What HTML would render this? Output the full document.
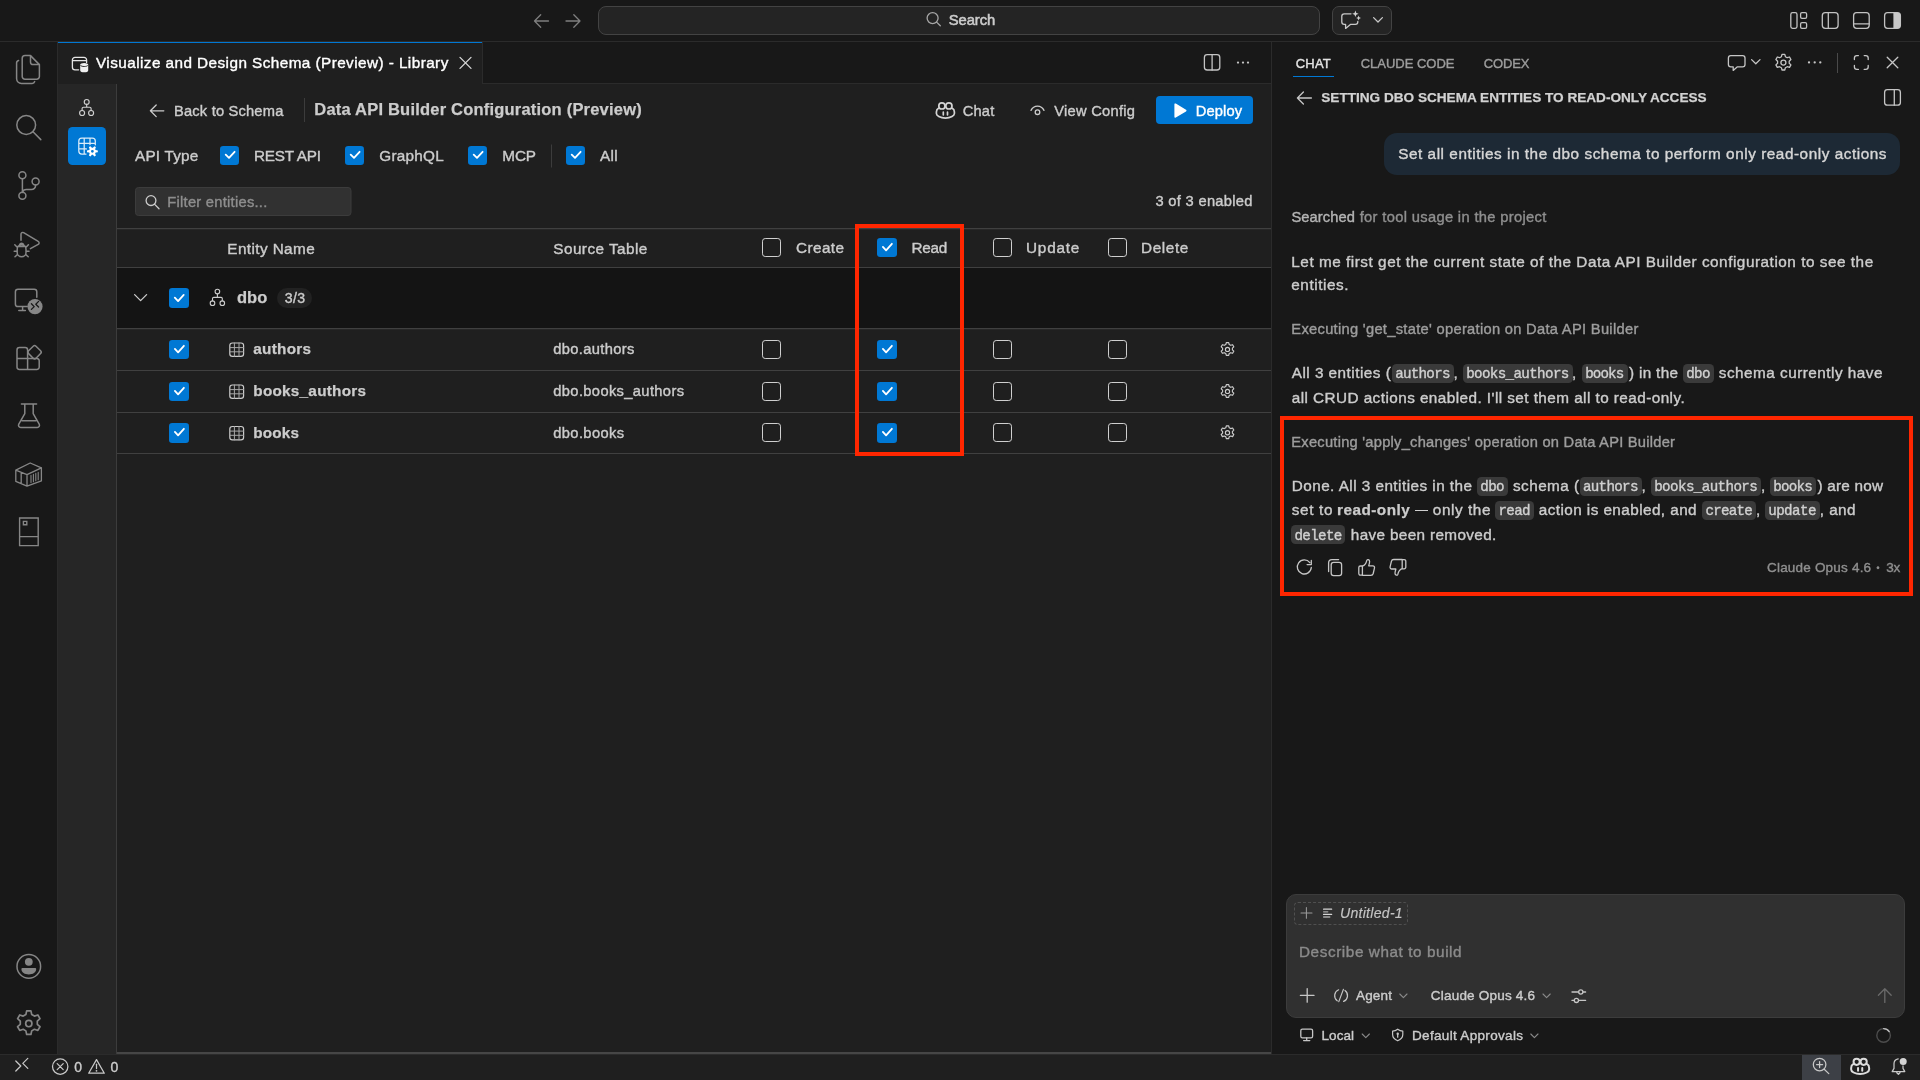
<!DOCTYPE html>
<html><head><meta charset="utf-8"><title>Visualize and Design Schema (Preview) - Library</title>
<style>
*{box-sizing:border-box;margin:0;padding:0}
html,body{width:1920px;height:1080px;overflow:hidden;background:#181818}
body{position:relative;font-family:"Liberation Sans",sans-serif;color:#ccc;font-size:15.6px}
.a{position:absolute}
.t{position:absolute;white-space:pre;line-height:20px;height:20px}
.cb{position:absolute;width:19.2px;height:19.2px;border-radius:3.2px}
.cb.on{background:#0078d4}
.cb.big{width:20.2px;height:20.2px}
.cb.off{border:1.2px solid #cfcfcf;background:#1f1f1f}
.cb svg{position:absolute;left:0;top:0}
.hl{position:absolute;height:1px;background:#3a3a3a}
.chip{position:absolute;height:19px;border-radius:4.5px;background:#3a3a3a}
svg{position:absolute;overflow:visible}
.ic{fill:none;stroke:#868686;stroke-width:1.5;stroke-linecap:round;stroke-linejoin:round}
.il{fill:none;stroke:#ccc;stroke-width:1.2;stroke-linecap:round;stroke-linejoin:round}
</style></head><body>
<!-- ======= backgrounds ======= -->
<div class="a" style="left:0;top:0;width:1920px;height:41px;background:#181818"></div>
<div class="a" style="left:0;top:41px;width:1920px;height:1px;background:#2b2b2b"></div>
<div class="a" style="left:57px;top:42px;width:1px;height:1012px;background:#2b2b2b"></div>
<!-- tabs bar -->
<div class="a" style="left:58px;top:83px;width:1213px;height:1px;background:#2b2b2b"></div>
<div class="a" style="left:58px;top:42px;width:424px;height:42px;background:#1f1f1f"></div>
<div class="a" style="left:58px;top:41.8px;width:424px;height:1.4px;background:#0078d4"></div>
<div class="a" style="left:482px;top:42px;width:1px;height:41px;background:#2b2b2b"></div>
<!-- editor -->
<div class="a" style="left:58px;top:84px;width:1213px;height:970px;background:#1f1f1f"></div>
<div class="a" style="left:58px;top:84px;width:58px;height:970px;background:#262626"></div>
<div class="a" style="left:116px;top:84px;width:1px;height:970px;background:#3c3c3c"></div>
<div class="a" style="left:117px;top:1052px;width:1154px;height:2px;background:#464646"></div>
<div class="a" style="left:1271px;top:42px;width:1px;height:1012px;background:#2b2b2b"></div>
<!-- status bar -->
<div class="a" style="left:0;top:1054px;width:1920px;height:26px;background:#1f1f1f"></div>
<div class="a" style="left:0;top:1054px;width:1920px;height:1px;background:#2b2b2b"></div>
<div class="a" style="left:1802px;top:1055px;width:39px;height:25px;background:#3d4046"></div>
<!-- nav arrows -->
<svg style="left:0;top:0" width="1920" height="42">
<g class="il" style="stroke:#7f7f7f;stroke-width:1.3">
<path d="M548.5 21H534.5M540.7 14.8L534.5 21L540.7 27.2"/>
<path d="M566 21H580M573.8 14.8L580 21L573.8 27.2"/>
</g>
<!-- search box -->
<rect x="598.5" y="6.5" width="721" height="28" rx="7.5" fill="#242424" stroke="#434343" stroke-width="1"/>
<g class="il" style="stroke:#a6a6a6;stroke-width:1.3"><circle cx="932.6" cy="18.1" r="5.5"/><path d="M936.6 22.100L940.300 25.800"/></g>
<!-- chat button -->
<rect x="1332.5" y="6.5" width="59" height="28" rx="6.5" fill="#242424" stroke="#434343" stroke-width="1"/>
<g class="il" style="stroke:#c8c8c8;stroke-width:1.3">
<path d="M1351 13.8H1344.2a2.4 2.4 0 0 0 -2.4 2.4V22a2.4 2.4 0 0 0 2.4 2.4H1345.6V28.4L1350.4 24.4H1355.4a2.4 2.4 0 0 0 2.4 -2.4V21.4"/>
<path d="M1373.6 17.6L1378 22L1382.4 17.6"/>
</g>
<path fill="#d0d0d0" d="M1355.4 10.6l.9 2.3 2.3 .9 -2.3 .9 -.9 2.3 -.9 -2.3 -2.3 -.9 2.3 -.9zM1358.6 15.6l.7 1.7 1.7 .7 -1.7 .7 -.7 1.7 -.7 -1.7 -1.7 -.7 1.7 -.7z"/>
<!-- layout icons -->
<g class="il" style="stroke:#c2c2c2;stroke-width:1.3">
<rect x="1790.8" y="12.7" width="6.2" height="15.6" rx="1.8"/>
<rect x="1800.6" y="12.7" width="6" height="5.6" rx="1.4"/>
<rect x="1800.6" y="22.7" width="6" height="5.6" rx="1.4"/>
<rect x="1822.3" y="12.7" width="15.8" height="15.6" rx="3"/><path d="M1828.3 12.7V28.3"/>
<rect x="1853.6" y="12.7" width="15.6" height="15.6" rx="3"/><path d="M1853.6 23.8H1869.2"/>
<rect x="1884.6" y="12.7" width="15.8" height="15.6" rx="3"/>
</g>
<path fill="#c8c8c8" d="M1893.4 12.7h4a3 3 0 0 1 3 3v9.6a3 3 0 0 1 -3 3h-4z"/>
</svg>

<svg style="left:0;top:42px" width="57" height="1012" viewBox="0 42 57 1012">
<g class="ic">
<!-- files -->
<path d="M30.5 55.6H25a2.8 2.8 0 0 0 -2.8 2.8V76.4a2.8 2.8 0 0 0 2.8 2.8H36.6a2.8 2.8 0 0 0 2.8 -2.8V64.6L30.5 55.6z"/>
<path d="M30.5 55.8V62a2.6 2.6 0 0 0 2.6 2.6H39.2"/>
<path d="M18.6 60.4a2.6 2.6 0 0 0 -2 2.6V78.6a4.8 4.8 0 0 0 4.8 4.8H32.2a2.6 2.6 0 0 0 2.5 -1.8"/>
<!-- search -->
<circle cx="26.2" cy="125" r="9.4"/><path d="M33 131.8L40.8 139.6"/>
<!-- source control -->
<circle cx="22.4" cy="175.2" r="3.5"/><circle cx="22.4" cy="195.8" r="3.5"/><circle cx="35.6" cy="181.4" r="3.5"/>
<path d="M22.4 178.8V192.2M35.6 185V185.4a4.2 4.2 0 0 1 -4.2 4.2H26.6a4.2 4.2 0 0 0 -4.2 2.8"/>
<!-- debug -->
<path d="M21 240.2V234.2a1.7 1.7 0 0 1 2.6 -1.5L38.2 241.4a1.7 1.7 0 0 1 0 3L30.4 248.6"/>
<path d="M17.2 249.2a4.4 4.4 0 0 1 8.8 0V252.4a4.4 4.4 0 0 1 -8.8 0zM17.6 246.6H25.6M17.2 247.2L14.8 244.8M26 247.2L28.4 244.8M17 251.2H14.2M26.2 251.2H29M17.6 254.4L15 256.8M25.6 254.4L28.2 256.8M19.6 244.6a2.2 2.2 0 0 1 4 0"/>
<!-- remote explorer -->
<path d="M27.2 306.6H18a2.6 2.6 0 0 1 -2.6 -2.6V291.8a2.6 2.6 0 0 1 2.6 -2.6H34.2a2.6 2.6 0 0 1 2.6 2.6V297.2M18.8 310.6H25.4M22.6 306.8V310.4"/>
<!-- extensions -->
<path d="M27.6 358.4V369.4H19.4a2.4 2.4 0 0 1 -2.4 -2.4V350a2.4 2.4 0 0 1 2.4 -2.4H25.2a2.4 2.4 0 0 1 2.4 2.4V358.4zM17 358.4H36.8a2.4 2.4 0 0 1 2.4 2.4V367a2.4 2.4 0 0 1 -2.4 2.4H27.6"/>
<path d="M33.2 346.2a2 2 0 0 1 2.8 0L40.6 350.8a2 2 0 0 1 0 2.8L36 358.2a2 2 0 0 1 -2.8 0L28.6 353.6a2 2 0 0 1 0 -2.800z"/>
<!-- flask -->
<path d="M21.4 404H36.6M24.8 404.2V413.6L18.8 424.2a2.2 2.2 0 0 0 1.900 3.300H37.300a2.200 2.200 0 0 0 1.900 -3.300L33.200 413.600V404.200M22 420.800H36"/>
<!-- container -->
<path d="M15.800 470.200L30.200 463L41.400 467.800V480.800L27 486.200L15.800 481.400zM15.800 470.200L27 474.600L41.400 467.800M27 474.600V486.200M21.200 472.400V483.600" style="stroke-width:1.300"/>
<path d="M31 475.400V482.600M33.400 474.400V481.800M35.800 473.400V480.800M38.200 472.400V479.800" style="stroke-width:1.100"/>
<!-- fridge -->
<path d="M19.600 518H38.200V545.600H19.600zM19.600 536.600H38.200M23.400 521.400H26.800V524.800H23.400z" style="stroke-linejoin:miter;stroke-width:1.400"/>
<!-- account -->
<circle cx="28.800" cy="966.400" r="11.800"/>
<!-- gear -->
<g transform="translate(28.8 1023.6) scale(1.12) translate(-28.8 -1023.6)"><circle cx="28.800" cy="1023.600" r="2.800"/>
<path d="M26.900 1012.300h3.800l.7 3.200 2.400 1.400 3.100 -1 1.900 3.300 -2.400 2.200v2.800l2.400 2.200 -1.900 3.300 -3.100 -1 -2.400 1.400 -.7 3.200h-3.800l-.7 -3.200 -2.400 -1.400 -3.100 1 -1.900 -3.300 2.400 -2.200v-2.800l-2.400 -2.200 1.900 -3.300 3.100 1 2.400 -1.400z"/></g>
</g>
<!-- remote badge -->
<circle cx="35" cy="306.600" r="7.600" fill="#868686"/>
<path d="M31.400 303.800L34.200 306.600L31.400 309.400M38.600 301.400L35.800 304.200L38.600 307" fill="none" stroke="#181818" stroke-width="1.300" stroke-linecap="round" stroke-linejoin="round"/>
<!-- account fill -->
<circle cx="28.800" cy="961.800" r="3.900" fill="#868686"/>
<path d="M22.400 968h12.800a1 1 0 0 1 1 1c0 3.600 -3.400 5.400 -7.400 5.400s-7.400 -1.800 -7.400 -5.400a1 1 0 0 1 1 -1z" fill="#868686"/>
</svg>
<!-- inner nav -->
<div class="a" style="left:68px;top:126.800px;width:38.200px;height:38.200px;border-radius:4.600px;background:#0078d4"></div>
<svg style="left:58px;top:84px" width="58" height="100" viewBox="58 84 58 100">
<g class="il" style="stroke:#d0d0d0;stroke-width:1.150">
<circle cx="86.700" cy="101.900" r="2.450"/><circle cx="82.100" cy="113" r="2.500"/><circle cx="91.100" cy="113" r="2.500"/>
<path d="M86.700 104.400V107.200M82.100 110.400V108.600a1.400 1.400 0 0 1 1.400 -1.400H89.700a1.400 1.400 0 0 1 1.400 1.400V110.400"/>
</g>
<g class="il" style="stroke:rgba(255,255,255,.86);stroke-width:1.250">
<path d="M86 154H81.800a3 3 0 0 1 -3 -3V141a3 3 0 0 1 3 -3H92.300a3 3 0 0 1 3 3V144.800M78.800 143.300H95.300M78.800 148.900H86.400M84.200 138V154M90 138V144.600"/>
</g>
<path fill="#fff" fill-rule="evenodd" d="M95.65 150.01L97.82 150.38L97.82 152.22L95.65 152.59L95.14 153.47L95.91 155.54L94.32 156.46L92.91 154.76L91.89 154.76L90.48 156.46L88.89 155.54L89.66 153.47L89.15 152.59L86.98 152.22L86.98 150.38L89.15 150.01L89.66 149.13L88.89 147.06L90.48 146.14L91.89 147.84L92.91 147.84L94.32 146.14L95.91 147.06L95.14 149.13zM91.00 151.30a1.4 1.4 0 1 0 2.8 0a1.4 1.4 0 1 0 -2.8 0z"/>
</svg>

<!-- tab icon + close + actions -->
<svg style="left:58px;top:42px" width="1213" height="42" viewBox="58 42 1213 42">
<g class="il" style="stroke:#e6e6e6;stroke-width:1.300">
<path d="M78.600 69.800H75a2.600 2.600 0 0 1 -2.600 -2.600V60a2.600 2.600 0 0 1 2.600 -2.600H84a2.600 2.600 0 0 1 2.600 2.600V62.400M72.400 60.600H86.600"/>
</g>
<path fill="#f0f0f0" d="M80.200 64.800c0 -1.200 1.800 -1.900 4 -1.900s4 .7 4 1.900v5.600c0 1.200 -1.800 1.900 -4 1.900s-4 -.7 -4 -1.900z"/>
<path fill="none" stroke="#1f1f1f" stroke-width=".9" d="M80.400 65.200c.5 .9 2 1.300 3.800 1.300s3.300 -.4 3.800 -1.300"/>
<path class="il" style="stroke:#d8d8d8;stroke-width:1.300" d="M460 57.400L471 68.400M471 57.400L460 68.400"/>
<g class="il" style="stroke:#c4c4c4;stroke-width:1.300"><rect x="1204.400" y="54.600" width="15.400" height="15.400" rx="2.800"/><path d="M1212.100 54.600V70"/></g>
<g fill="#c4c4c4"><circle cx="1238" cy="62.600" r="1.150"/><circle cx="1243" cy="62.600" r="1.150"/><circle cx="1248" cy="62.600" r="1.150"/></g>
</svg>
<!-- toolbar -->
<svg style="left:117px;top:84px" width="1154" height="380" viewBox="117 84 1154 380">
<path class="il" style="stroke:#ccc;stroke-width:1.300" d="M163.800 110.800H150.400M156.200 105L150.400 110.800L156.200 116.600"/>
<path d="M304.500 98V122" stroke="#3c3c3c" stroke-width="1"/>
<!-- copilot -->
<g class="il" style="stroke:#d4d4d4;stroke-width:1.700">
<circle cx="941.900" cy="105.900" r="3.100"/><circle cx="948.900" cy="105.900" r="3.100"/>
<path d="M938.500 108.300c-1.500 .8 -2.100 2.200 -2.100 3.700v1.600c0 1.200 1 2.200 2.400 3c1.800 1 4 1.600 6.600 1.600s4.800 -.6 6.600 -1.600c1.400 -.8 2.400 -1.800 2.400 -3v-1.600c0 -1.500 -.6 -2.900 -2.100 -3.700"/>
<path d="M943.300 112.200V114.800M947.500 112.200V114.800"/>
</g>
<!-- eye -->
<g class="il" style="stroke:#ccc;stroke-width:1.300"><path d="M1031 110.400c1.400 -2.800 3.800 -4.200 6.500 -4.200s5.100 1.400 6.500 4.200"/><circle cx="1037.500" cy="112.200" r="2.300"/></g>
<!-- deploy -->
<rect x="1156" y="96" width="97" height="28" rx="4" fill="#0078d4"/>
<path d="M1174.400 104.400v12.400a.9 .9 0 0 0 1.400 .8l10.200 -6.200a.9 .9 0 0 0 0 -1.600l-10.200 -6.200a.9 .9 0 0 0 -1.400 .8z" fill="#fff"/>
<!-- api divider -->
<path d="M551.500 144.500V167.500" stroke="#3c3c3c" stroke-width="1"/>
<!-- filter -->
<rect x="135.500" y="187.500" width="215.500" height="28" rx="3" fill="#313131" stroke="#3c3c3c" stroke-width="1"/>
<g class="il" style="stroke:#ccc;stroke-width:1.300"><circle cx="151" cy="200.600" r="4.900"/><path d="M154.700 204.400L159 208.800"/></g>
<!-- group bg -->
<rect x="117" y="268" width="1154" height="60" fill="#141414"/>
<!-- lines -->
<g stroke="#404040" stroke-width="1.200"><path d="M117 228.600H1271M117 267.500H1271M117 328.600H1271M117 370.500H1271M117 412.500H1271M117 453.500H1271"/></g>
<!-- chevron -->
<path class="il" style="stroke:#ccc;stroke-width:1.300" d="M134.600 294.600L140.600 300.600L146.600 294.600"/>
<!-- badge -->
<rect x="277" y="288" width="35" height="20" rx="10" fill="#222"/>
<!-- schema icon -->
<g class="il" style="stroke:#ccc;stroke-width:1.100">
<circle cx="217.400" cy="291.600" r="2.300"/><circle cx="212.500" cy="303.200" r="2.300"/><circle cx="222.300" cy="303.200" r="2.300"/>
<path d="M217.400 294V297.400M212.500 300.800V298.600a1.200 1.200 0 0 1 1.200 -1.200H221.100a1.200 1.200 0 0 1 1.200 1.200V300.800"/>
</g>
<!-- table icons -->
<g class="il" style="stroke:#ccc;stroke-width:1.200">
<g><rect x="229.800" y="343" width="13.800" height="13.400" rx="2.600"/><path d="M229.800 347.600H243.600M229.800 351.800H243.600M234.400 343V356.400M239 343V356.400" style="stroke-width:1;stroke:#a8a8a8"/></g><g transform="translate(0 42)"><rect x="229.800" y="343" width="13.800" height="13.400" rx="2.600"/><path d="M229.800 347.600H243.600M229.800 351.800H243.600M234.400 343V356.400M239 343V356.400" style="stroke-width:1;stroke:#a8a8a8"/></g><g transform="translate(0 83.5)"><rect x="229.800" y="343" width="13.800" height="13.400" rx="2.600"/><path d="M229.800 347.600H243.600M229.800 351.800H243.600M234.400 343V356.400M239 343V356.400" style="stroke-width:1;stroke:#a8a8a8"/></g>
</g>
<!-- gears -->
<g class="il" style="stroke:#ccc;stroke-width:1.150">
<g><circle cx="1227.500" cy="349.400" r="2.100"/><path d="M1226.300 342.600h2.400l.5 1.900 1.500 .8 1.900 -.6 1.200 2.100 -1.400 1.400v1.600l1.400 1.400 -1.200 2.100 -1.900 -.6 -1.500 .8 -.5 1.900h-2.400l-.5 -1.900 -1.500 -.8 -1.900 .6 -1.200 -2.100 1.400 -1.400v-1.600l-1.400 -1.400 1.200 -2.100 1.900 .6 1.500 -.8z"/></g><g transform="translate(0 42)"><circle cx="1227.500" cy="349.400" r="2.100"/><path d="M1226.300 342.600h2.400l.5 1.900 1.500 .8 1.900 -.6 1.200 2.100 -1.400 1.400v1.600l1.400 1.400 -1.200 2.100 -1.900 -.6 -1.500 .8 -.5 1.900h-2.400l-.5 -1.900 -1.500 -.8 -1.900 .6 -1.200 -2.100 1.400 -1.400v-1.600l-1.400 -1.400 1.200 -2.100 1.900 .6 1.500 -.8z"/></g><g transform="translate(0 83.3)"><circle cx="1227.500" cy="349.400" r="2.100"/><path d="M1226.300 342.600h2.400l.5 1.900 1.500 .8 1.900 -.6 1.200 2.100 -1.400 1.400v1.600l1.400 1.400 -1.200 2.100 -1.900 -.6 -1.500 .8 -.5 1.900h-2.400l-.5 -1.900 -1.500 -.8 -1.900 .6 -1.200 -2.100 1.400 -1.400v-1.600l-1.400 -1.400 1.200 -2.100 1.900 .6 1.500 -.8z"/></g>
</g>
</svg>
<!-- checkboxes -->
<div id="cbs">
<div class="cb on" style="left:220px;top:146px"><svg width="21" height="21"><path d="M5.700 8.600L9 11.900L14.600 5.800" fill="none" stroke="#fff" stroke-width="1.800" stroke-linecap="round" stroke-linejoin="round"/></svg></div>
<div class="cb on" style="left:345.2px;top:146px"><svg width="21" height="21"><path d="M5.700 8.600L9 11.900L14.600 5.800" fill="none" stroke="#fff" stroke-width="1.800" stroke-linecap="round" stroke-linejoin="round"/></svg></div>
<div class="cb on" style="left:468px;top:146px"><svg width="21" height="21"><path d="M5.700 8.600L9 11.900L14.600 5.800" fill="none" stroke="#fff" stroke-width="1.800" stroke-linecap="round" stroke-linejoin="round"/></svg></div>
<div class="cb on" style="left:566px;top:146px"><svg width="21" height="21"><path d="M5.700 8.600L9 11.900L14.600 5.800" fill="none" stroke="#fff" stroke-width="1.800" stroke-linecap="round" stroke-linejoin="round"/></svg></div>
<div class="cb on" style="left:876.9px;top:238px;width:20.2px;height:19.3px"><svg width="21" height="21"><path d="M5.900 8.900L9.100 12.300L14.900 5.800" fill="none" stroke="#fff" stroke-width="1.800" stroke-linecap="round" stroke-linejoin="round"/></svg></div>
<div class="cb on" style="left:168.9px;top:339.9px;width:20.2px;height:19.3px"><svg width="21" height="21"><path d="M5.900 8.900L9.100 12.300L14.900 5.800" fill="none" stroke="#fff" stroke-width="1.800" stroke-linecap="round" stroke-linejoin="round"/></svg></div>
<div class="cb on" style="left:876.9px;top:339.9px;width:20.2px;height:19.3px"><svg width="21" height="21"><path d="M5.900 8.900L9.100 12.300L14.900 5.800" fill="none" stroke="#fff" stroke-width="1.800" stroke-linecap="round" stroke-linejoin="round"/></svg></div>
<div class="cb on" style="left:168.9px;top:381.9px;width:20.2px;height:19.3px"><svg width="21" height="21"><path d="M5.900 8.900L9.100 12.300L14.900 5.800" fill="none" stroke="#fff" stroke-width="1.800" stroke-linecap="round" stroke-linejoin="round"/></svg></div>
<div class="cb on" style="left:876.9px;top:381.9px;width:20.2px;height:19.3px"><svg width="21" height="21"><path d="M5.900 8.900L9.100 12.300L14.900 5.800" fill="none" stroke="#fff" stroke-width="1.800" stroke-linecap="round" stroke-linejoin="round"/></svg></div>
<div class="cb on" style="left:168.9px;top:423.4px;width:20.2px;height:19.3px"><svg width="21" height="21"><path d="M5.900 8.900L9.100 12.300L14.900 5.800" fill="none" stroke="#fff" stroke-width="1.800" stroke-linecap="round" stroke-linejoin="round"/></svg></div>
<div class="cb on" style="left:876.9px;top:423.4px;width:20.2px;height:19.3px"><svg width="21" height="21"><path d="M5.900 8.900L9.100 12.300L14.900 5.800" fill="none" stroke="#fff" stroke-width="1.800" stroke-linecap="round" stroke-linejoin="round"/></svg></div>
<div class="cb on" style="left:168.8px;top:287.8px;width:20.3px;height:20.4px"><svg width="21" height="21"><path d="M5.800 9.700L9.100 13.100L14.700 6.900" fill="none" stroke="#fff" stroke-width="1.800" stroke-linecap="round" stroke-linejoin="round"/></svg></div>
<div class="cb off" style="left:761.8px;top:238px"></div>
<div class="cb off" style="left:992.8px;top:238px"></div>
<div class="cb off" style="left:1107.9px;top:238px"></div>
<div class="cb off" style="left:761.8px;top:339.8px"></div>
<div class="cb off" style="left:992.8px;top:339.8px"></div>
<div class="cb off" style="left:1107.9px;top:339.8px"></div>
<div class="cb off" style="left:761.8px;top:381.8px"></div>
<div class="cb off" style="left:992.8px;top:381.8px"></div>
<div class="cb off" style="left:1107.9px;top:381.8px"></div>
<div class="cb off" style="left:761.8px;top:423.3px"></div>
<div class="cb off" style="left:992.8px;top:423.3px"></div>
<div class="cb off" style="left:1107.9px;top:423.3px"></div>
</div>

<div class="a" style="left:1293px;top:75.8px;width:41px;height:1.2px;background:#0078d4"></div>
<!-- bubble -->
<div class="a" style="left:1384px;top:133px;width:516px;height:42px;border-radius:13px;background:#1d2935"></div>
<div class="a" style="left:1414.800px;top:509.600px;width:13.300px;height:1.400px;background:#cfcfcf"></div>
<!-- input -->
<div class="a" style="left:1286px;top:894px;width:619px;height:124px;border-radius:10px;background:#303030;border:1px solid #3c3c3c"></div>
<div class="a" style="left:1294px;top:902px;width:114px;height:23px;border-radius:4px;border:1px dashed #505050"></div>
<svg style="left:1272px;top:42px" width="648" height="1012" viewBox="1272 42 648 1012">
<!-- header icons -->
<g class="il" style="stroke:#c6c6c6;stroke-width:1.300">
<path d="M1730.800 55.600H1742.600a2.400 2.400 0 0 1 2.400 2.400V64.400a2.400 2.400 0 0 1 -2.400 2.400H1737.400L1733.200 70.400V66.800H1730.800a2.400 2.400 0 0 1 -2.400 -2.400V58a2.400 2.400 0 0 1 2.400 -2.400z"/>
<path d="M1751.600 59.600L1755.800 63.800L1760 59.600"/>
<circle cx="1783.400" cy="62.600" r="2.500"/>
<path d="M1782 54.400h2.800l.6 2.300 1.800 1 2.300 -.7 1.400 2.500 -1.700 1.700v2l1.700 1.700 -1.400 2.500 -2.300 -.7 -1.800 1 -.6 2.300h-2.800l-.6 -2.300 -1.800 -1 -2.300 .7 -1.400 -2.500 1.700 -1.700v-2l-1.700 -1.700 1.400 -2.500 2.300 .7 1.800 -1z"/>
<path d="M1854.400 59.600V58a2.400 2.400 0 0 1 2.400 -2.400H1858.400M1864.200 55.600H1865.800a2.400 2.400 0 0 1 2.400 2.400V59.600M1868.200 65.400V67a2.400 2.400 0 0 1 -2.400 2.400H1864.200M1858.400 69.400H1856.800a2.400 2.400 0 0 1 -2.400 -2.400V65.400"/>
<path d="M1887.200 57.200L1897.800 67.800M1897.800 57.200L1887.200 67.800"/>
<rect x="1884.600" y="89.600" width="15.800" height="15.600" rx="2.800"/><path d="M1894.300 89.600V105.200"/>
<path d="M1311.400 98H1297.400M1303.400 92L1297.400 98L1303.400 104"/>
</g>
<g fill="#c6c6c6"><circle cx="1809" cy="62.400" r="1.150"/><circle cx="1814.700" cy="62.400" r="1.150"/><circle cx="1820.300" cy="62.400" r="1.150"/></g>
<path d="M1837.500 53V73" stroke="#4a4a4a" stroke-width="1"/>
<!-- response toolbar -->
<g class="il" style="stroke:#c6c6c6;stroke-width:1.300">
<path d="M1309.800 562.600a7 7 0 1 0 1.500 4.900M1311.300 560.400V564.600H1307.100"/>
<rect x="1331.200" y="562.400" width="10.400" height="13.200" rx="2.400"/><path d="M1338.600 559.600H1332a3.400 3.400 0 0 0 -3.400 3.400V571.600"/>
<path d="M1362.400 566H1360.400a1.600 1.600 0 0 0 -1.600 1.600V573.600a1.600 1.600 0 0 0 1.600 1.600H1362.400zM1362.400 566.200c2.400 -.8 3.800 -3 4.400 -5.800c.3 -1.200 2.800 -1 2.800 1.200c0 1.600 -.5 3 -.9 4.200H1372.800a1.700 1.700 0 0 1 1.700 2.100l-1.300 5.600a2.400 2.400 0 0 1 -2.300 1.800H1362.400"/>
<path d="M1402.200 568.800H1404.200a1.600 1.600 0 0 0 1.600 -1.600V561.200a1.600 1.600 0 0 0 -1.600 -1.600H1402.200zM1402.200 568.600c-2.400 .8 -3.800 3 -4.400 5.800c-.3 1.200 -2.800 1 -2.800 -1.200c0 -1.600 .5 -3 .9 -4.200H1391.800a1.700 1.700 0 0 1 -1.700 -2.100l1.300 -5.600a2.400 2.400 0 0 1 2.300 -1.800H1402.200"/>
</g>
<!-- input icons -->
<g class="il" style="stroke:#bdbdbd;stroke-width:1.200">
<path d="M1301 913H1312M1306.400 907.600V918.200" style="stroke:#9a9a9a;stroke-width:1.050"/>
<path d="M1323.600 909.200H1331.600M1323.600 914.400H1331.600" style="stroke-width:1.300;stroke:#d6d6d6"/><path d="M1323.600 911.800H1327.800M1323.600 917H1329.800" style="stroke-width:1.300;stroke:#a8a8a8"/>
</g>
<g class="il" style="stroke:#c6c6c6;stroke-width:1.300">
<path d="M1300.400 995.400H1314M1307.200 988.600V1002.200"/>
<path d="M1338.600 989.800a6.400 6.400 0 0 0 -1.400 11M1343.600 1001.400a6.400 6.400 0 0 0 1.400 -11M1343.400 989.400L1338.800 1001.600" style="stroke-width:1.200"/>
<path d="M1399.800 994L1403.400 997.600L1407 994" style="stroke:#8a8a8a;stroke-width:1.100"/>
<path d="M1543 994L1546.600 997.600L1550.200 994" style="stroke:#8a8a8a;stroke-width:1.100"/>
<path d="M1572 992H1578.400M1583.200 992H1585.600M1572 1000.400H1574M1578.800 1000.400H1585.600"/><circle cx="1580.800" cy="992" r="2.100"/><circle cx="1576.400" cy="1000.400" r="2.100"/>
<rect x="1300.800" y="1029.200" width="11.800" height="8.600" rx="1.600"/><path d="M1303.600 1040.600H1309.800M1306.700 1038V1040.400"/>
<path d="M1362.200 1034L1365.800 1037.600L1369.400 1034" style="stroke:#8a8a8a;stroke-width:1.100"/>
<path d="M1397.700 1029.200c1.600 1.200 3.200 1.800 5.100 1.900v3.500c0 2.900 -2 5 -5.100 6.200c-3.100 -1.200 -5.100 -3.300 -5.100 -6.200v-3.500c1.900 -.1 3.500 -.7 5.100 -1.900z" style="stroke-width:1.200"/>
<path d="M1530.800 1034L1534.400 1037.600L1538 1034" style="stroke:#8a8a8a;stroke-width:1.100"/>
</g>
<circle cx="1397.700" cy="1033.800" r="1.200" fill="#c6c6c6"/><path d="M1397.700 1034.400V1037.200" stroke="#c6c6c6" stroke-width="1.300" stroke-linecap="round"/>
<path class="il" style="stroke:#6a6a6a;stroke-width:1.300" d="M1884.800 1002.400V988.800M1878.400 995.200L1884.800 988.800L1891.200 995.200"/>
<circle cx="1883.600" cy="1035.400" r="6.800" fill="none" stroke="#4c4c4c" stroke-width="1.400"/>
<path d="M1883.600 1028.600a6.800 6.800 0 0 1 5.600 3" fill="none" stroke="#bdbdbd" stroke-width="1.400" stroke-linecap="round"/>
</svg>

<div class="chip" style="left:1392.0px;top:363.7px;width:61.7px"></div>
<div class="chip" style="left:1463.0px;top:363.7px;width:109.5px"></div>
<div class="chip" style="left:1582.0px;top:363.7px;width:45.5px"></div>
<div class="chip" style="left:1683.0px;top:363.7px;width:30.7px"></div>
<div class="chip" style="left:1477.0px;top:476.7px;width:30.8px"></div>
<div class="chip" style="left:1579.7px;top:476.7px;width:62.0px"></div>
<div class="chip" style="left:1651.0px;top:476.7px;width:110.0px"></div>
<div class="chip" style="left:1770.0px;top:476.7px;width:46.0px"></div>
<div class="chip" style="left:1495.3px;top:500.7px;width:38.5px"></div>
<div class="chip" style="left:1702.3px;top:500.7px;width:53.7px"></div>
<div class="chip" style="left:1765.0px;top:500.7px;width:54.7px"></div>
<div class="chip" style="left:1291.3px;top:525.4px;width:54.2px"></div>
<div class="a" style="left:0;top:0;width:1920px;height:1080px;will-change:transform">
<span class="t" style="-webkit-text-stroke:0.38px;left:948.8px;top:10.0px;font-size:14.8px;letter-spacing:-0.098px;-webkit-text-stroke:0.55px;">Search</span>
<span class="t" style="-webkit-text-stroke:0.38px;left:96.0px;top:52.5px;font-size:15.3px;letter-spacing:0.438px;color:#fff;">Visualize and Design Schema (Preview) - Library</span>
<span class="t" style="-webkit-text-stroke:0.38px;left:174.0px;top:101.0px;font-size:14.7px;letter-spacing:0.181px;">Back to Schema</span>
<span class="t" style="-webkit-text-stroke:0.25px;left:314.3px;top:99.0px;font-size:16.5px;letter-spacing:0.207px;font-weight:700;">Data API Builder Configuration (Preview)</span>
<span class="t" style="-webkit-text-stroke:0.38px;left:962.7px;top:101.0px;font-size:14.7px;letter-spacing:0.190px;">Chat</span>
<span class="t" style="-webkit-text-stroke:0.38px;left:1054.3px;top:101.0px;font-size:14.7px;letter-spacing:0.259px;">View Config</span>
<span class="t" style="-webkit-text-stroke:0.38px;left:1195.8px;top:101.0px;font-size:14.7px;letter-spacing:0.093px;color:#fff;">Deploy</span>
<span class="t" style="-webkit-text-stroke:0.38px;left:135.0px;top:145.5px;font-size:15.3px;letter-spacing:0.215px;">API Type</span>
<span class="t" style="-webkit-text-stroke:0.38px;left:254.0px;top:145.5px;font-size:15.3px;letter-spacing:-0.228px;">REST API</span>
<span class="t" style="-webkit-text-stroke:0.38px;left:379.3px;top:145.5px;font-size:15.3px;letter-spacing:0.246px;">GraphQL</span>
<span class="t" style="-webkit-text-stroke:0.38px;left:502.3px;top:145.5px;font-size:15.3px;letter-spacing:-0.150px;">MCP</span>
<span class="t" style="-webkit-text-stroke:0.38px;left:600.0px;top:145.5px;font-size:15.3px;letter-spacing:0.350px;">All</span>
<span class="t" style="-webkit-text-stroke:0.38px;left:167.3px;top:192.0px;font-size:14.7px;letter-spacing:0.265px;color:#8e8e8e;">Filter entities...</span>
<span class="t" style="-webkit-text-stroke:0.38px;left:1155.5px;top:191.0px;font-size:14.7px;letter-spacing:0.299px;">3 of 3 enabled</span>
<span class="t" style="-webkit-text-stroke:0.38px;left:227.3px;top:238.5px;font-size:15.3px;letter-spacing:0.409px;">Entity Name</span>
<span class="t" style="-webkit-text-stroke:0.38px;left:553.3px;top:238.5px;font-size:15.3px;letter-spacing:0.453px;">Source Table</span>
<span class="t" style="-webkit-text-stroke:0.38px;left:796.0px;top:237.5px;font-size:15.3px;letter-spacing:0.416px;">Create</span>
<span class="t" style="-webkit-text-stroke:0.38px;left:911.5px;top:237.5px;font-size:15.3px;letter-spacing:-0.259px;">Read</span>
<span class="t" style="-webkit-text-stroke:0.38px;left:1026.0px;top:237.5px;font-size:15.3px;letter-spacing:0.794px;">Update</span>
<span class="t" style="-webkit-text-stroke:0.38px;left:1141.0px;top:237.5px;font-size:15.3px;letter-spacing:0.616px;">Delete</span>
<span class="t" style="-webkit-text-stroke:0.25px;left:237.0px;top:287.0px;font-size:16.5px;letter-spacing:0.025px;font-weight:700;">dbo</span>
<span class="t" style="-webkit-text-stroke:0.38px;left:284.7px;top:288.0px;font-size:14.1px;letter-spacing:0.353px;">3/3</span>
<span class="t" style="-webkit-text-stroke:0.25px;left:253.3px;top:338.5px;font-size:15.3px;letter-spacing:0.268px;font-weight:700;">authors</span>
<span class="t" style="-webkit-text-stroke:0.25px;left:253.3px;top:380.5px;font-size:15.3px;letter-spacing:0.254px;font-weight:700;">books_authors</span>
<span class="t" style="-webkit-text-stroke:0.25px;left:253.3px;top:422.5px;font-size:15.3px;letter-spacing:0.163px;font-weight:700;">books</span>
<span class="t" style="-webkit-text-stroke:0.38px;left:553.3px;top:339.0px;font-size:14.7px;letter-spacing:0.342px;">dbo.authors</span>
<span class="t" style="-webkit-text-stroke:0.38px;left:553.3px;top:381.0px;font-size:14.7px;letter-spacing:0.360px;">dbo.books_authors</span>
<span class="t" style="-webkit-text-stroke:0.38px;left:553.3px;top:423.0px;font-size:14.7px;letter-spacing:0.365px;">dbo.books</span>
<span class="t" style="-webkit-text-stroke:0.38px;left:1295.8px;top:53.5px;font-size:13.0px;letter-spacing:0.154px;color:#e4e4e4;">CHAT</span>
<span class="t" style="-webkit-text-stroke:0.38px;left:1360.7px;top:53.5px;font-size:13.0px;letter-spacing:-0.012px;color:#9d9d9d;">CLAUDE CODE</span>
<span class="t" style="-webkit-text-stroke:0.38px;left:1483.7px;top:53.5px;font-size:13.0px;letter-spacing:-0.109px;color:#9d9d9d;">CODEX</span>
<span class="t" style="-webkit-text-stroke:0.25px;left:1321.3px;top:87.5px;font-size:13.6px;letter-spacing:-0.003px;font-weight:700;color:#d2d2d2;">SETTING DBO SCHEMA ENTITIES TO READ-ONLY ACCESS</span>
<span class="t" style="-webkit-text-stroke:0.38px;left:1398.2px;top:143.5px;font-size:15.3px;letter-spacing:0.548px;color:#d6d6d6;">Set all entities in the dbo schema to perform only read-only actions</span>
<span class="t" style="-webkit-text-stroke:0.38px;left:1291.4px;top:207.0px;font-size:14.7px;letter-spacing:0.104px;color:#b4b4b4;">Searched</span>
<span class="t" style="-webkit-text-stroke:0.38px;left:1359.7px;top:207.0px;font-size:14.7px;letter-spacing:0.340px;color:#8f8f8f;">for tool usage in the project</span>
<span class="t" style="-webkit-text-stroke:0.38px;left:1291.3px;top:251.5px;font-size:15.3px;letter-spacing:0.532px;">Let me first get the current state of the Data API Builder configuration to see the</span>
<span class="t" style="-webkit-text-stroke:0.38px;left:1291.3px;top:274.5px;font-size:15.3px;letter-spacing:0.560px;">entities.</span>
<span class="t" style="-webkit-text-stroke:0.38px;left:1291.3px;top:319.0px;font-size:14.7px;letter-spacing:0.296px;color:#9d9d9d;">Executing &#x27;get_state&#x27; operation on Data API Builder</span>
<span class="t" style="-webkit-text-stroke:0.38px;left:1291.7px;top:362.5px;font-size:15.3px;letter-spacing:0.485px;">All 3 entities (</span>
<span class="t" style="-webkit-text-stroke:0.38px;left:1453.5px;top:362.5px;font-size:15.3px;letter-spacing:0.000px;">,</span>
<span class="t" style="-webkit-text-stroke:0.38px;left:1572.0px;top:362.5px;font-size:15.3px;letter-spacing:0.000px;">,</span>
<span class="t" style="-webkit-text-stroke:0.38px;left:1629.0px;top:362.5px;font-size:15.3px;letter-spacing:0.319px;">) in the</span>
<span class="t" style="-webkit-text-stroke:0.38px;left:1718.8px;top:362.5px;font-size:15.3px;letter-spacing:0.490px;">schema currently have</span>
<span class="t" style="-webkit-text-stroke:0.38px;left:1291.7px;top:387.5px;font-size:15.3px;letter-spacing:0.442px;">all CRUD actions enabled. I&#x27;ll set them all to read-only.</span>
<span class="t" style="-webkit-text-stroke:0.38px;left:1291.3px;top:432.0px;font-size:14.7px;letter-spacing:0.243px;color:#9d9d9d;">Executing &#x27;apply_changes&#x27; operation on Data API Builder</span>
<span class="t" style="-webkit-text-stroke:0.38px;left:1291.7px;top:475.5px;font-size:15.3px;letter-spacing:0.459px;">Done. All 3 entities in the</span>
<span class="t" style="-webkit-text-stroke:0.38px;left:1513.0px;top:475.5px;font-size:15.3px;letter-spacing:0.442px;">schema (</span>
<span class="t" style="-webkit-text-stroke:0.38px;left:1641.5px;top:475.5px;font-size:15.3px;letter-spacing:0.000px;">,</span>
<span class="t" style="-webkit-text-stroke:0.38px;left:1761.0px;top:475.5px;font-size:15.3px;letter-spacing:0.000px;">,</span>
<span class="t" style="-webkit-text-stroke:0.38px;left:1817.5px;top:475.5px;font-size:15.3px;letter-spacing:0.217px;">) are now</span>
<span class="t" style="-webkit-text-stroke:0.38px;left:1291.7px;top:499.5px;font-size:15.3px;letter-spacing:0.676px;">set to</span>
<span class="t" style="-webkit-text-stroke:0.25px;left:1337.0px;top:499.5px;font-size:15.3px;letter-spacing:0.480px;font-weight:700;">read-only</span>
<span class="t" style="-webkit-text-stroke:0.38px;left:1432.8px;top:499.5px;font-size:15.3px;letter-spacing:0.575px;">only the</span>
<span class="t" style="-webkit-text-stroke:0.38px;left:1538.8px;top:499.5px;font-size:15.3px;letter-spacing:0.426px;">action is enabled, and</span>
<span class="t" style="-webkit-text-stroke:0.38px;left:1756.0px;top:499.5px;font-size:15.3px;letter-spacing:0.000px;">,</span>
<span class="t" style="-webkit-text-stroke:0.38px;left:1819.8px;top:499.5px;font-size:15.3px;letter-spacing:0.417px;">, and</span>
<span class="t" style="-webkit-text-stroke:0.38px;left:1350.8px;top:524.5px;font-size:15.3px;letter-spacing:0.355px;">have been removed.</span>
<span class="t" style="-webkit-text-stroke:0.38px;left:1767.0px;top:557.5px;font-size:13.5px;letter-spacing:0.198px;color:#8f8f8f;">Claude Opus 4.6</span>
<span class="t" style="-webkit-text-stroke:0.38px;left:1876.6px;top:558.0px;font-size:8.5px;letter-spacing:0.000px;color:#8f8f8f;">•</span>
<span class="t" style="-webkit-text-stroke:0.38px;left:1886.2px;top:557.5px;font-size:13.5px;letter-spacing:-0.266px;color:#8f8f8f;">3x</span>
<span class="t" style="-webkit-text-stroke:0.38px;left:1395.2px;top:364.0px;font-size:14.2px;letter-spacing:-0.718px;color:#d0d0d0;font-family:'Liberation Mono',monospace;">authors</span>
<span class="t" style="-webkit-text-stroke:0.38px;left:1466.2px;top:364.0px;font-size:14.2px;letter-spacing:-0.632px;color:#d0d0d0;font-family:'Liberation Mono',monospace;">books_authors</span>
<span class="t" style="-webkit-text-stroke:0.38px;left:1585.2px;top:364.0px;font-size:14.2px;letter-spacing:-0.870px;color:#d0d0d0;font-family:'Liberation Mono',monospace;">books</span>
<span class="t" style="-webkit-text-stroke:0.38px;left:1686.2px;top:364.0px;font-size:14.2px;letter-spacing:-0.623px;color:#d0d0d0;font-family:'Liberation Mono',monospace;">dbo</span>
<span class="t" style="-webkit-text-stroke:0.38px;left:1480.2px;top:477.0px;font-size:14.2px;letter-spacing:-0.573px;color:#d0d0d0;font-family:'Liberation Mono',monospace;">dbo</span>
<span class="t" style="-webkit-text-stroke:0.38px;left:1582.9px;top:477.0px;font-size:14.2px;letter-spacing:-0.668px;color:#d0d0d0;font-family:'Liberation Mono',monospace;">authors</span>
<span class="t" style="-webkit-text-stroke:0.38px;left:1654.2px;top:477.0px;font-size:14.2px;letter-spacing:-0.591px;color:#d0d0d0;font-family:'Liberation Mono',monospace;">books_authors</span>
<span class="t" style="-webkit-text-stroke:0.38px;left:1773.2px;top:477.0px;font-size:14.2px;letter-spacing:-0.745px;color:#d0d0d0;font-family:'Liberation Mono',monospace;">books</span>
<span class="t" style="-webkit-text-stroke:0.38px;left:1498.5px;top:501.0px;font-size:14.2px;letter-spacing:-0.654px;color:#d0d0d0;font-family:'Liberation Mono',monospace;">read</span>
<span class="t" style="-webkit-text-stroke:0.38px;left:1705.5px;top:501.0px;font-size:14.2px;letter-spacing:-0.759px;color:#d0d0d0;font-family:'Liberation Mono',monospace;">create</span>
<span class="t" style="-webkit-text-stroke:0.38px;left:1768.2px;top:501.0px;font-size:14.2px;letter-spacing:-0.559px;color:#d0d0d0;font-family:'Liberation Mono',monospace;">update</span>
<span class="t" style="-webkit-text-stroke:0.38px;left:1294.5px;top:526.0px;font-size:14.2px;letter-spacing:-0.659px;color:#d0d0d0;font-family:'Liberation Mono',monospace;">delete</span>
<span class="t" style="-webkit-text-stroke:0.38px;left:1340.0px;top:903.0px;font-size:14.1px;letter-spacing:0.264px;color:#c4c4c4;font-style:italic;-webkit-text-stroke:0.15px;">Untitled-1</span>
<span class="t" style="-webkit-text-stroke:0.38px;left:1299.0px;top:941.5px;font-size:15.3px;letter-spacing:0.576px;color:#8b8b8b;">Describe what to build</span>
<span class="t" style="-webkit-text-stroke:0.38px;left:1356.0px;top:985.5px;font-size:13.5px;letter-spacing:0.155px;">Agent</span>
<span class="t" style="-webkit-text-stroke:0.38px;left:1430.8px;top:985.5px;font-size:13.5px;letter-spacing:0.205px;">Claude Opus 4.6</span>
<span class="t" style="-webkit-text-stroke:0.38px;left:1321.5px;top:1025.5px;font-size:13.5px;letter-spacing:0.055px;">Local</span>
<span class="t" style="-webkit-text-stroke:0.38px;left:1412.0px;top:1025.5px;font-size:13.5px;letter-spacing:0.324px;">Default Approvals</span>
<span class="t" style="-webkit-text-stroke:0.38px;left:74.3px;top:1057.0px;font-size:14px;letter-spacing:0.000px;">0</span>
<span class="t" style="-webkit-text-stroke:0.38px;left:110.4px;top:1057.0px;font-size:14px;letter-spacing:0.000px;">0</span>
</div>
<!-- status bar icons -->
<svg style="left:0;top:1054px" width="1920" height="26" viewBox="0 1054 1920 26">
<g class="il" style="stroke:#c8c8c8;stroke-width:1.250">
<path d="M15.800 1066.400L20.800 1071.400L15.800 1076.400" transform="translate(0,-5.400)"/>
<path d="M27.800 1058.800L22.800 1063.800L27.800 1068.800" transform="translate(0,-.4)" />
<circle cx="60.200" cy="1066.600" r="7.700"/><path d="M57.200 1063.600L63.200 1069.600M63.200 1063.600L57.200 1069.600"/>
<path d="M96.500 1059.600L104.300 1073.200H88.700z"/><path d="M96.500 1064.200V1068.600"/>
<circle cx="1819.600" cy="1064.600" r="6.300"/><path d="M1824.200 1069.200L1828.800 1073.600M1816.600 1064.600H1822.600M1819.600 1061.600V1067.600"/>
<path d="M1898.200 1058.800a5 5 0 0 0 -4.200 5v4.600l-1.800 3.200h12.600l-1.800 -3.200v-2.600M1896.800 1072.800l1.600 1.600 1.600 -1.600"/>
</g>
<circle cx="96.500" cy="1070.800" r=".9" fill="#c8c8c8"/>
<circle cx="1903.200" cy="1061.600" r="3.500" fill="#d4d4d4"/>
<g class="il" style="stroke:#dcdcdc;stroke-width:2" transform="translate(914.75 955.9)">
<circle cx="941.900" cy="105.900" r="3.100"/><circle cx="948.900" cy="105.900" r="3.100"/>
<path d="M938.500 108.300c-1.500 .8 -2.100 2.200 -2.100 3.700v1.600c0 1.200 1 2.200 2.400 3c1.800 1 4 1.600 6.600 1.600s4.800 -.6 6.600 -1.600c1.400 -.8 2.400 -1.800 2.400 -3v-1.600c0 -1.500 -.6 -2.900 -2.100 -3.700"/>
<path d="M943.300 112.200V114.800M947.500 112.200V114.800"/>
</g>
</svg>
<!-- red annotation boxes -->
<div class="a" style="left:855px;top:223.9px;width:109px;height:232px;border:4.200px solid #ff2600"></div>
<div class="a" style="left:1280px;top:416px;width:633.100px;height:180px;border:4.200px solid #ff2600"></div>

</body></html>
